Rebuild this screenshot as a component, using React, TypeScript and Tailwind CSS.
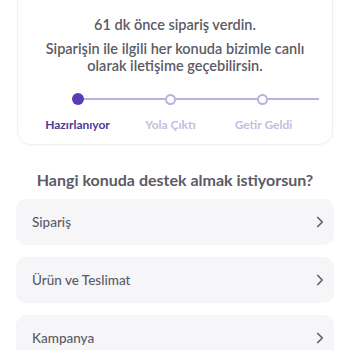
import React from 'react';
import { ChevronRight } from 'lucide-react';

const steps = [
  { id: 'prep', label: 'Hazırlanıyor', active: true },
  { id: 'road', label: 'Yola Çıktı', active: false },
  { id: 'done', label: 'Getir Geldi', active: false },
];

const topics = ['Sipariş', 'Ürün ve Teslimat', 'Kampanya'];

export default function App() {
  return (
    <div className="w-[350px] h-[350px] overflow-hidden bg-white font-['Lato',sans-serif] text-[#5b5b66]">
      {/* Status card */}
      <div className="mx-[17px] -mt-4 pt-[31px] pb-[12px] rounded-b-[14px] border border-[#f0f0f3] shadow-[0_1px_3px_rgba(0,0,0,0.03)]">
        <p className="text-center text-[14.5px] font-semibold leading-[18px]">61 dk önce sipariş verdin.</p>
        <p className="mt-[6px] text-center text-[14.5px] font-semibold leading-[17px]">
          Siparişin ile ilgili her konuda bizimle canlı
          <br />
          olarak iletişime geçebilirsin.
        </p>

        {/* Stepper */}
        <div className="mt-[19px] ml-[54px] flex items-center">
          <span className="w-[12px] h-[12px] rounded-full bg-[#5a3db6] shrink-0" />
          <span className="w-[81px] h-[2px] bg-[#b9b0de]" />
          <span className="w-[11px] h-[11px] rounded-full border-2 border-[#b9b0de] bg-white shrink-0" />
          <span className="w-[81px] h-[2px] bg-[#b9b0de]" />
          <span className="w-[11px] h-[11px] rounded-full border-2 border-[#b9b0de] bg-white shrink-0" />
          <span className="w-[51px] h-[2px] bg-[#b9b0de]" />
        </div>
        <div className="mt-[13px] ml-[13px] flex text-[12px] font-bold leading-[14px]">
          {steps.map((s) => (
            <div key={s.id} className={`w-[93px] text-center ${s.active ? 'text-[#4b3a9a]' : 'text-[#c4bde0]'}`}>
              {s.label}
            </div>
          ))}
        </div>
      </div>

      <h2 className="mt-[25px] text-center text-[16px] font-bold leading-[20px]">Hangi konuda destek almak istiyorsun?</h2>

      <div className="mt-[9px] mx-[16px] flex flex-col gap-[12px]">
        {topics.map((t) => (
          <button
            key={t}
            className="h-[46px] rounded-[10px] bg-[#f6f6f8] pl-[16px] pr-[5px] flex items-center justify-between text-[13.5px] font-medium text-[#5b5b66]"
          >
            <span>{t}</span>
            <ChevronRight className="w-[18px] h-[18px] text-[#5e5e6a]" strokeWidth={2.2} />
          </button>
        ))}
      </div>
    </div>
  );
}
